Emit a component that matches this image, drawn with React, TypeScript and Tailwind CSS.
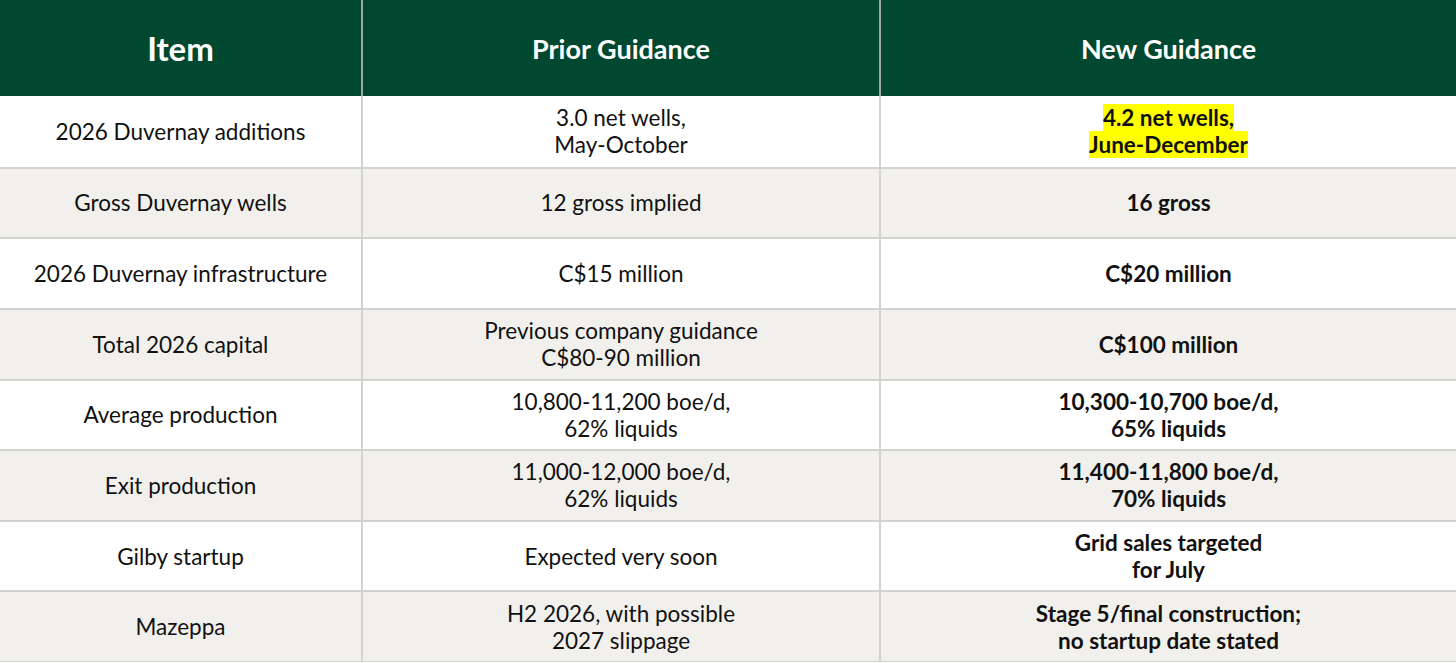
const rows: { item: string; prior: string[]; next: string[]; highlight?: boolean }[] = [
  { item: "2026 Duvernay additions", prior: ["3.0 net wells,", "May-October"], next: ["4.2 net wells,", "June-December"], highlight: true },
  { item: "Gross Duvernay wells", prior: ["12 gross implied"], next: ["16 gross"] },
  { item: "2026 Duvernay infrastructure", prior: ["C$15 million"], next: ["C$20 million"] },
  { item: "Total 2026 capital", prior: ["Previous company guidance", "C$80-90 million"], next: ["C$100 million"] },
  { item: "Average production", prior: ["10,800-11,200 boe/d,", "62% liquids"], next: ["10,300-10,700 boe/d,", "65% liquids"] },
  { item: "Exit production", prior: ["11,000-12,000 boe/d,", "62% liquids"], next: ["11,400-11,800 boe/d,", "70% liquids"] },
  { item: "Gilby startup", prior: ["Expected very soon"], next: ["Grid sales targeted", "for July"] },
  { item: "Mazeppa", prior: ["H2 2026, with possible", "2027 slippage"], next: ["Stage 5/final construction;", "no startup date stated"] },
];

const cell = "flex flex-col items-center justify-center text-center leading-[27px]";

export default function App() {
  return (
    <div className="w-[1456px] h-[663px] bg-white font-['Lato','Open_Sans',sans-serif] text-[22.5px] text-[#111]">
      <div className="grid grid-cols-[363px_518px_1fr] grid-rows-[96px_repeat(8,minmax(0,1fr))] h-[662px] border-b border-[#cfcfcf]">
        <div className={`${cell} bg-[#004830] text-white font-bold text-[33px] border-r-2 border-[#9aa69f]`}>Item</div>
        <div className={`${cell} bg-[#004830] text-white font-bold text-[27px] border-r-2 border-[#9aa69f]`}>Prior Guidance</div>
        <div className={`${cell} bg-[#004830] text-white font-bold text-[27px]`}>New Guidance</div>
        {rows.map((r, i) => {
          const bg = i % 2 === 0 ? "bg-white" : "bg-[#f1f0ec]";
          const line = i === 0 ? "" : "border-t-2 border-[#d2d2d0]";
          return [
            <div key={`a${i}`} className={`${cell} ${bg} ${line} border-r-2 border-r-[#d2d2d0]`}>{r.item}</div>,
            <div key={`b${i}`} className={`${cell} ${bg} ${line} border-r-2 border-r-[#d2d2d0]`}>
              {r.prior.map((t) => <span key={t}>{t}</span>)}
            </div>,
            <div key={`c${i}`} className={`${cell} ${bg} ${line} font-bold`}>
              {r.highlight ? (
                <div className="flex flex-col items-center">
                  {r.next.map((t) => <span key={t} className="bg-[#ffff00]">{t}</span>)}
                </div>
              ) : (
                r.next.map((t) => <span key={t}>{t}</span>)
              )}
            </div>,
          ];
        })}
      </div>
    </div>
  );
}
